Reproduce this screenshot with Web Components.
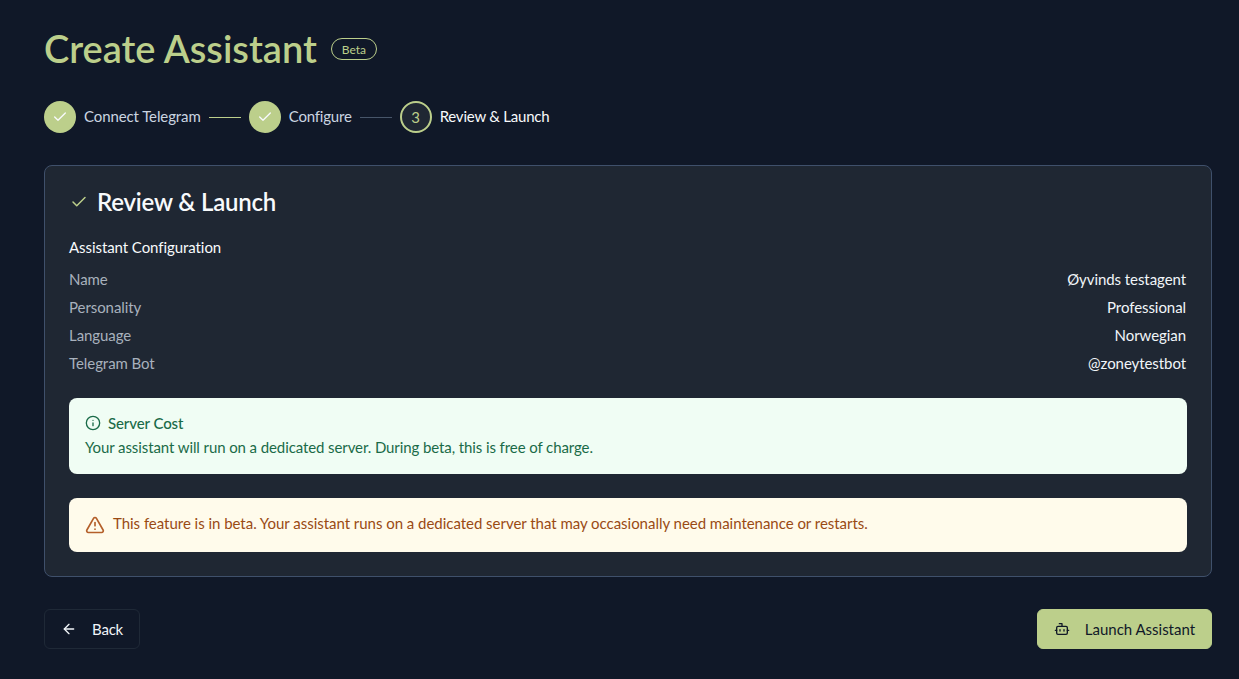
<!DOCTYPE html>
<html>
<head>
<meta charset="utf-8">
<style>
  html, body { margin: 0; background: #101828; }
  body { font-family: "Lato", "Liberation Sans", sans-serif; color: #f8fafc; font-size: 15px; letter-spacing: -0.07px; }
</style>
</head>
<body>
<wizard-page>
  <page-title>Create Assistant</page-title>
  <wizard-steps>
    <wizard-step state="done" label="Connect Telegram" style="--label-spacing: -0.1px"></wizard-step>
    <step-line done></step-line>
    <wizard-step state="done" label="Configure" style="--label-spacing: -0.2px"></wizard-step>
    <step-line></step-line>
    <wizard-step state="current" number="3" label="Review &amp; Launch" style="--label-spacing: -0.22px"></wizard-step>
  </wizard-steps>
  <review-card heading="Review &amp; Launch">
    <config-list>
      <config-row name="Name" value="Øyvinds testagent"></config-row>
      <config-row name="Personality" value="Professional"></config-row>
      <config-row name="Language" value="Norwegian"></config-row>
      <config-row name="Telegram Bot" value="@zoneytestbot"></config-row>
    </config-list>
    <cost-note heading="Server Cost">Your assistant will run on a dedicated server. During beta, this is free of charge.</cost-note>
    <beta-warning>This feature is in beta. Your assistant runs on a dedicated server that may occasionally need maintenance or restarts.</beta-warning>
  </review-card>
  <wizard-actions>
    <wizard-button icon="back">Back</wizard-button>
    <wizard-button icon="bot" primary>Launch Assistant</wizard-button>
  </wizard-actions>
</wizard-page>

<script>
const ICONS = {
  check: '<path d="M20 6 9 17l-5-5"/>',
  back: '<path d="m12 19-7-7 7-7"/><path d="M19 12H5"/>',
  bot: '<path d="M12 8V4H8"/><rect width="16" height="12" x="4" y="8" rx="2"/><path d="M2 14h2"/><path d="M20 14h2"/><path d="M15 13v2"/><path d="M9 13v2"/>',
  info: '<circle cx="12" cy="12" r="10"/><path d="M12 16v-4"/><path d="M12 8h.01"/>',
  alert: '<path d="m21.73 18-8-14a2 2 0 0 0-3.48 0l-8 14A2 2 0 0 0 4 21h16a2 2 0 0 0 1.73-3"/><path d="M12 9v4"/><path d="M12 17h.01"/>',
};
const icon = (name, size) =>
  `<svg width="${size}" height="${size}" viewBox="0 0 24 24" fill="none" stroke="currentColor" stroke-width="2" stroke-linecap="round" stroke-linejoin="round">${ICONS[name]}</svg>`;

class WizardPage extends HTMLElement {
  constructor() {
    super();
    this.attachShadow({ mode: "open" });
    this.shadowRoot.innerHTML = `
      <style>
        :host { display: flex; flex-direction: column; box-sizing: border-box; height: 679px; padding: 24px 27px 0 44px; }
      </style>
      <slot></slot>`;
  }
}

class PageTitle extends HTMLElement {
  constructor() {
    super();
    this.attachShadow({ mode: "open" });
    this.shadowRoot.innerHTML = `
      <style>
        :host { display: flex; align-items: flex-start; gap: 14px; height: 50px; margin-bottom: 27px; }
        h1 { margin: 0; font-size: 38px; line-height: 48px; font-weight: 600; color: #bccf8b; letter-spacing: 0; }
        span { box-sizing: border-box; height: 22px; margin-top: 14px; padding: 1px 10px 0; border: 1px solid #bccf8b; border-radius: 11px; font-size: 12px; line-height: 19px; letter-spacing: 0; color: #bccf8b; }
      </style>
      <h1><slot></slot></h1>
      <span>Beta</span>`;
  }
}

class WizardSteps extends HTMLElement {
  constructor() {
    super();
    this.attachShadow({ mode: "open" });
    this.shadowRoot.innerHTML = `
      <style>
        :host { display: flex; align-items: center; gap: 8px; height: 32px; margin-bottom: 32px; }
      </style>
      <slot></slot>`;
  }
}

class WizardStep extends HTMLElement {
  constructor() {
    super();
    this.attachShadow({ mode: "open" });
  }
  connectedCallback() {
    const current = this.getAttribute("state") === "current";
    this.shadowRoot.innerHTML = `
      <style>
        :host { display: flex; align-items: center; gap: 8px; }
        .dot { box-sizing: border-box; width: 32px; height: 32px; border-radius: 50%; display: flex; align-items: center; justify-content: center; background: #bccf8b; color: #f8fafc; }
        .dot.current { background: #1f2733; border: 2px solid #bccf8b; color: #bccf8b; font-size: 15px; }
        .label { line-height: 18px; margin-top: -2px; letter-spacing: var(--label-spacing, 0); color: ${current ? "#f8fafc" : "#cbd5e1"}; }
      </style>
      <div class="dot ${current ? "current" : ""}">${current ? this.getAttribute("number") : icon("check", 16)}</div>
      <div class="label">${this.getAttribute("label").replace("&", "&amp;")}</div>`;
  }
}

class StepLine extends HTMLElement {
  constructor() {
    super();
    this.attachShadow({ mode: "open" });
  }
  connectedCallback() {
    const color = this.hasAttribute("done") ? "#bccf8b" : "#475569";
    this.shadowRoot.innerHTML = `
      <style>:host { display: block; width: 32px; height: 1px; background: ${color}; }</style>`;
  }
}

class ReviewCard extends HTMLElement {
  constructor() {
    super();
    this.attachShadow({ mode: "open" });
  }
  connectedCallback() {
    this.shadowRoot.innerHTML = `
      <style>
        :host { display: block; box-sizing: border-box; height: 412px; padding: 22px 24px 24px; background: #1f2733; border: 1px solid #3f506b; border-radius: 8px; }
        h2 { display: flex; align-items: center; gap: 9px; margin: 0 0 22px; height: 28px; padding-left: 1px; font-size: 24px; line-height: 28px; font-weight: 600; letter-spacing: -0.2px; color: #f8fafc; }
        h2 svg { color: #bccf8b; }
      </style>
      <h2>${icon("check", 18)}${this.getAttribute("heading").replace("&", "&amp;")}</h2>
      <slot></slot>`;
  }
}

class ConfigList extends HTMLElement {
  constructor() {
    super();
    this.attachShadow({ mode: "open" });
    this.shadowRoot.innerHTML = `
      <style>
        :host { display: block; margin-bottom: 24px; }
        h3 { margin: 0 0 12px; padding-bottom: 2px; font-size: 15px; line-height: 18px; font-weight: 400; color: #f8fafc; }
        div { display: flex; flex-direction: column; gap: 8px; }
      </style>
      <h3>Assistant Configuration</h3>
      <div><slot></slot></div>`;
  }
}

class ConfigRow extends HTMLElement {
  constructor() {
    super();
    this.attachShadow({ mode: "open" });
  }
  connectedCallback() {
    this.shadowRoot.innerHTML = `
      <style>
        :host { display: flex; justify-content: space-between; height: 20px; padding-right: 1px; line-height: 18px; }
        .name { color: #a8b1bd; }
        .value { color: #f1f5f9; }
      </style>
      <span class="name">${this.getAttribute("name")}</span>
      <span class="value">${this.getAttribute("value")}</span>`;
  }
}

class CostNote extends HTMLElement {
  constructor() {
    super();
    this.attachShadow({ mode: "open" });
  }
  connectedCallback() {
    this.shadowRoot.innerHTML = `
      <style>
        :host { display: block; box-sizing: border-box; height: 76px; margin-bottom: 24px; padding: 15px 16px 0; background: #f0fdf4; border-radius: 8px; color: #1a6b48; line-height: 20px; letter-spacing: -0.095px; }
        .head { display: flex; align-items: center; gap: 7px; margin-bottom: 4px; font-weight: 500; }
      </style>
      <div class="head">${icon("info", 16)}${this.getAttribute("heading")}</div>
      <slot></slot>`;
  }
}

class BetaWarning extends HTMLElement {
  constructor() {
    super();
    this.attachShadow({ mode: "open" });
    this.shadowRoot.innerHTML = `
      <style>
        :host { display: flex; align-items: center; gap: 8px; box-sizing: border-box; height: 54px; padding: 0 16px; background: #fffbeb; border-radius: 8px; color: #9a4a14; line-height: 20px; letter-spacing: -0.03px; }
        span { padding-bottom: 4px; }
        svg { color: #b45f2a; }
      </style>
      ${icon("alert", 20)}<span><slot></slot></span>`;
  }
}

class WizardActions extends HTMLElement {
  constructor() {
    super();
    this.attachShadow({ mode: "open" });
    this.shadowRoot.innerHTML = `
      <style>
        :host { display: flex; justify-content: space-between; margin-top: 32px; }
      </style>
      <slot></slot>`;
  }
}

class WizardButton extends HTMLElement {
  constructor() {
    super();
    this.attachShadow({ mode: "open" });
  }
  connectedCallback() {
    const primary = this.hasAttribute("primary");
    this.shadowRoot.innerHTML = `
      <style>
        :host { display: flex; align-items: center; gap: 15px; box-sizing: border-box; height: 40px; padding: 0 16px; border-radius: 6px;
          letter-spacing: ${primary ? "-0.02px" : "-0.2px"};
          background: ${primary ? "#bccf8b" : "#101828"}; color: ${primary ? "#101828" : "#f1f5f9"}; border: 1px solid ${primary ? "#bccf8b" : "#1f2937"}; }
      </style>
      ${icon(this.getAttribute("icon"), 16)}<slot></slot>`;
  }
}

customElements.define("wizard-page", WizardPage);
customElements.define("page-title", PageTitle);
customElements.define("wizard-steps", WizardSteps);
customElements.define("wizard-step", WizardStep);
customElements.define("step-line", StepLine);
customElements.define("review-card", ReviewCard);
customElements.define("config-list", ConfigList);
customElements.define("config-row", ConfigRow);
customElements.define("cost-note", CostNote);
customElements.define("beta-warning", BetaWarning);
customElements.define("wizard-actions", WizardActions);
customElements.define("wizard-button", WizardButton);
</script>
</body>
</html>
